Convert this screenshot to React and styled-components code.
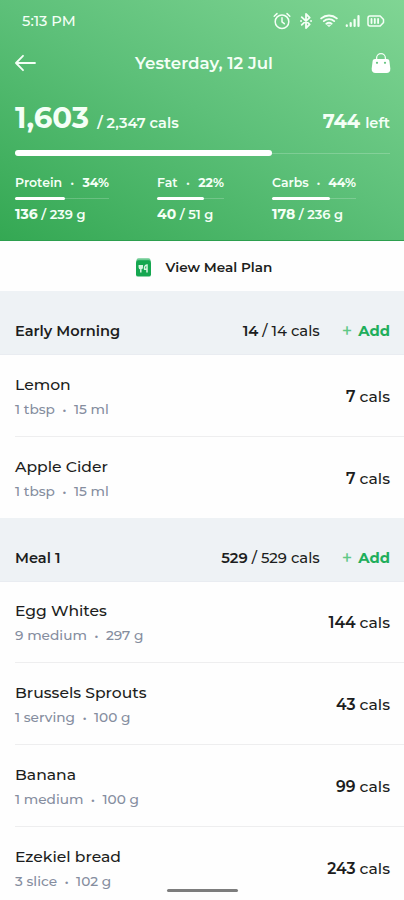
import React from "react"
import styled, { createGlobalStyle } from "styled-components"

const GlobalStyle = createGlobalStyle`
  * {
    box-sizing: border-box;
  }

  body {
    margin: 0;
    background: #ffffff;
    font-family: "Montserrat", "Inter", sans-serif;
    color: #1c1d20;
    overflow: hidden;
  }
`

const Screen = styled.main`
  position: relative;
  width: 404px;
  height: 900px;
  overflow: hidden;
  background: #fefefe;
`

const Text = styled.span`
  display: block;
  font-size: ${props => props.$size || 14}px;
  font-weight: ${props => props.$weight || 500};
  line-height: 20px;
  color: ${props => props.$color || "inherit"};
  white-space: pre;
`

const Summary = styled.header`
  height: 241px;
  padding: 11px 13px 0 15px;
  color: #f4fff6;
  background: linear-gradient(208deg, #80d594 0%, #5dc079 48%, #34a853 100%);
  border-bottom: 1px solid #2c9f4e;
`

const StatusBar = styled.div`
  height: 20px;
  padding: 0 6px 0 7px;
  display: flex;
  align-items: center;
  justify-content: space-between;
`

const StatusIcons = styled.div`
  display: flex;
  align-items: center;
  gap: 5.5px;

  svg {
    display: block;
  }
`

const TitleBar = styled.div`
  height: 24px;
  margin-top: 20px;
  display: grid;
  grid-template-columns: 22px 1fr 20px;
  align-items: center;
  justify-items: center;

  svg {
    display: block;
  }
`

const Totals = styled.div`
  height: 30px;
  margin: 33px 1px 0 0;
  display: flex;
  align-items: baseline;
`

const Remaining = styled.div`
  margin-left: auto;
  display: flex;
  align-items: baseline;
  gap: 5px;
`

const Track = styled.div`
  height: ${props => props.$height}px;
  margin: ${props => props.$margin || 0};
  display: flex;
  align-items: center;
  background: linear-gradient(rgba(255, 255, 255, 0.2), rgba(255, 255, 255, 0.2)) center / 100% 1px no-repeat;
`

const Fill = styled.div`
  width: ${props => props.$width}px;
  height: 100%;
  border-radius: 4px;
  background: #ffffff;
`

const Macros = styled.div`
  margin-top: 17px;
  display: grid;
  grid-template-columns: 142px 115px 1fr;
`

const Macro = styled.div`
  width: ${props => props.$width}px;
`

const MacroLine = styled.div`
  display: flex;
  align-items: baseline;
  justify-content: ${props => (props.$spread ? "space-between" : "flex-start")};
`

const PlanLink = styled.div`
  height: 50px;
  padding: 2px 0 0 136px;
  display: flex;
  align-items: center;
  gap: 14.5px;
`

const SectionHeader = styled.div`
  height: 64px;
  padding: 16px 14px 0 15px;
  display: flex;
  align-items: center;
  background: #eef2f5;
  border-bottom: 1px solid #e9ecf1;
`

const SectionCals = styled.div`
  margin-left: auto;
  display: flex;
`

const AddButton = styled.div`
  margin-left: 22px;
  display: flex;
  align-items: center;
  gap: 6px;
`

const Row = styled.div`
  height: ${props => props.$height || 82}px;
  margin-left: 15px;
  padding: 2px 14px 0 0;
  display: flex;
  align-items: center;
  justify-content: space-between;
  border-bottom: ${props => (props.$last ? "0" : "1px solid #eeeeef")};
`

const Food = styled.div`
  display: flex;
  flex-direction: column;
  gap: 4px;
`

const Cals = styled.div`
  display: flex;
  gap: 4px;
`

const HomeIndicator = styled.div`
  position: absolute;
  left: 167px;
  bottom: 8px;
  width: 71px;
  height: 3px;
  border-radius: 2px;
  background: #7d7d7d;
`

const line = {
  fill: "none",
  stroke: "currentColor",
  strokeLinecap: "round",
  strokeLinejoin: "round",
}

const AlarmIcon = () => (
  <svg width="18" height="18" viewBox="0 0 18 18" {...line} strokeWidth="1.5">
    <circle cx="9" cy="9.7" r="6.8" />
    <path d="M9 5.7v4.2l2.3 1.8M1.2 4.2 4 1.6M14 1.6l2.8 2.6" />
  </svg>
)

const BluetoothIcon = () => (
  <svg width="18" height="18" viewBox="0 0 18 18" {...line} strokeWidth="1.8">
    <path d="m4.7 5.2 8 7.2L9 16V2l3.7 3.6-8 7.2" />
    <path d="M4 9h.1M14 9h.1" />
  </svg>
)

const WifiIcon = () => (
  <svg width="18" height="18" viewBox="0 0 18 18" {...line} strokeWidth="1.9">
    <path d="M1.2 6.4C5.7 2.5 12.3 2.5 16.8 6.4M3.8 9.1c3-2.6 7.4-2.6 10.4 0M6.4 11.7c1.5-1.2 3.7-1.2 5.2 0" />
    <path d="m7.5 13.3 1.5 1.5 1.5-1.5Z" fill="currentColor" strokeWidth=".6" />
  </svg>
)

const SignalIcon = () => (
  <svg width="18" height="18" viewBox="0 0 18 18" {...line} strokeWidth="2.2">
    <path d="M2.8 14v-.7M6.7 14v-3M10.6 14V7.8M14.5 14V4" />
  </svg>
)

const BatteryIcon = () => (
  <svg width="18" height="18" viewBox="0 0 18 18" {...line} strokeWidth="1.5">
    <path d="M3 4h10.2l3.3 3.5v3L13.2 14H3a2 2 0 0 1-2-2V6a2 2 0 0 1 2-2Z" />
    <path d="M4.5 7v4M7.8 7v4M11.1 7v4" strokeWidth="1.8" />
  </svg>
)

const BackIcon = () => (
  <svg width="22" height="18" viewBox="0 0 22 18" {...line} strokeWidth="1.8">
    <path d="M20 9H1.4M8 1.8 1 9l7 7.2" />
  </svg>
)

const BagIcon = () => (
  <svg width="20" height="22" viewBox="0 0 20 22">
    <path d="M5.6 9V6a4.4 4.4 0 0 1 8.8 0v3" {...line} strokeWidth="1.3" />
    <path d="M4 7h12c1.3 0 2.2.7 2.4 2l.9 7.5c.3 2.8-1.2 4.6-3.8 4.6h-11C1.9 21.1.4 19.3.7 16.5L1.6 9C1.800 7.7 2.700 7 4 7Z" fill="#fff" />
    <circle cx="6" cy="10.800" r="1.100" fill="#66c480" />
    <circle cx="14" cy="10.800" r="1.100" fill="#66c480" />
  </svg>
)

const PlanIcon = () => (
  <svg width="15" height="19" viewBox="0 0 15 19">
    <rect x=".5" y=".3" width="14" height="5" rx="2" fill="#6fcb94" />
    <rect y="2.3" width="15" height="16.3" rx="2.2" fill="#15a750" />
    <path d="M3.3 7v2.2a1.5 1.5 0 0 0 3 0V7M4.8 7v7.5M11 14.5V7c-2 0-2.8 2-2.4 4.2H11" fill="none" stroke="#d9f5e4" strokeWidth="1.5" />
  </svg>
)

const macros = [
  { name: "Protein", percent: "34%", eaten: "136", goal: "/ 239 g", width: 94, fill: 50 },
  { name: "Fat", percent: "22%", eaten: "40", goal: "/ 51 g", width: 67, fill: 47 },
  { name: "Carbs", percent: "44%", eaten: "178", goal: "/ 236 g", width: 84, fill: 58 },
]

const meals = [
  {
    name: "Early Morning",
    eaten: "14",
    goal: " / 14 cals",
    foods: [
      { name: "Lemon", amount: "1 tbsp", weight: "15 ml", cals: "7" },
      { name: "Apple Cider", amount: "1 tbsp", weight: "15 ml", cals: "7", height: 81 },
    ],
  },
  {
    name: "Meal 1",
    eaten: "529",
    goal: " / 529 cals",
    foods: [
      { name: "Egg Whites", amount: "9 medium", weight: "297 g", cals: "144", height: 81 },
      { name: "Brussels Sprouts", amount: "1 serving", weight: "100 g", cals: "43" },
      { name: "Banana", amount: "1 medium", weight: "100 g", cals: "99" },
      { name: "Ezekiel bread", amount: "3 slice", weight: "102 g", cals: "243" },
    ],
  },
]

const Meal = ({ meal }) => (
  <section>
    <SectionHeader>
      <Text $weight={600} $size={14.6}>{meal.name}</Text>
      <SectionCals>
        <Text $weight={600} $size={14.8}>{meal.eaten}</Text>
        <Text $size={14.8}>{meal.goal}</Text>
      </SectionCals>
      <AddButton>
        <Text $color="#5fc886" $size={18} $weight={500}>+</Text>
        <Text $color="#20ae5b" $weight={700} $size={14.8}>Add</Text>
      </AddButton>
    </SectionHeader>
    {meal.foods.map((food, i) => (
      <Row key={food.name} $height={food.height} $last={i === meal.foods.length - 1}>
        <Food>
          <Text $size={15.6}>{food.name}</Text>
          <Text $size={13.7} $color="#858d9e">{`${food.amount}  •  ${food.weight}`}</Text>
        </Food>
        <Cals>
          <Text $size={15.6} $weight={600}>{food.cals}</Text>
          <Text $size={15.6}>cals</Text>
        </Cals>
      </Row>
    ))}
  </section>
)

const App = () => (
  <Screen>
    <GlobalStyle />
    <Summary>
      <StatusBar>
        <Text $size={14.6}>5:13 PM</Text>
        <StatusIcons>
          <AlarmIcon />
          <BluetoothIcon />
          <WifiIcon />
          <SignalIcon />
          <BatteryIcon />
        </StatusIcons>
      </StatusBar>
      <TitleBar>
        <BackIcon />
        <Text $size={16.7} $weight={600}>Yesterday, 12 Jul</Text>
        <BagIcon />
      </TitleBar>
      <Totals>
        <Text $size={29.2} $weight={700}>1,603</Text>
        <Text $size={14.6} $weight={600}>  / 2,347 cals</Text>
        <Remaining>
          <Text $size={19.4} $weight={700}>744</Text>
          <Text $size={14.6} $weight={600}>left</Text>
        </Remaining>
      </Totals>
      <Track $height={6} $margin="12px 1px 0 0">
        <Fill $width={257} />
      </Track>
      <Macros>
        {macros.map(macro => (
          <Macro key={macro.name} $width={macro.width}>
            <MacroLine $spread>
              <Text $size={12.5} $weight={600}>{macro.name}</Text>
              <Text $size={12.5}>•</Text>
              <Text $size={12.5} $weight={700}>{macro.percent}</Text>
            </MacroLine>
            <Track $height={3} $margin="4px 0">
              <Fill $width={macro.fill} />
            </Track>
            <MacroLine>
              <Text $size={14} $weight={700}>{macro.eaten}</Text>
              <Text $size={13} $weight={600}> {macro.goal}</Text>
            </MacroLine>
          </Macro>
        ))}
      </Macros>
    </Summary>
    <PlanLink>
      <PlanIcon />
      <Text $weight={600} $size={13.6}>View Meal Plan</Text>
    </PlanLink>
    {meals.map(meal => (
      <Meal key={meal.name} meal={meal} />
    ))}
    <HomeIndicator />
  </Screen>
)

export default App
